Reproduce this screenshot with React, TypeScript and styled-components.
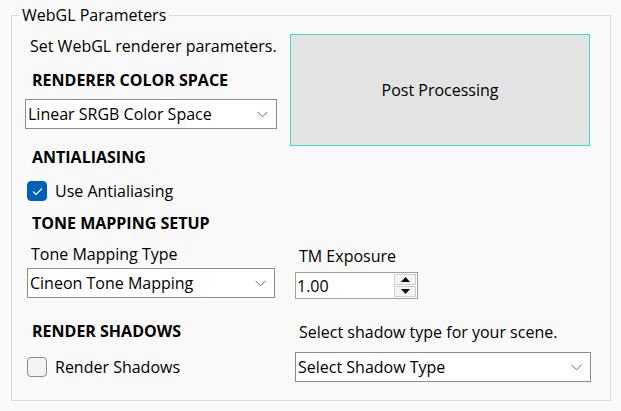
import React from "react";
import styled, { createGlobalStyle } from "styled-components";

const Global = createGlobalStyle`
  html, body { margin: 0; padding: 0; background: #f9f9f9; }
  body { font-family: "Open Sans", "Noto Sans", sans-serif; color: #000; }
  #root { width: 621px; height: 411px; }
`;

const Group = styled.fieldset`
  box-sizing: border-box;
  margin: 4px 0 0 11px;
  width: 600px;
  height: 397px;
  border: 1px solid #d9d9d9;
  padding: 7px 0 0 13px;
  display: flex;
  flex-direction: column;
`;

const Legend = styled.legend`
  font-size: 16px;
  line-height: 22px;
  padding: 0 3px;
  margin-left: -6px;
`;

const Row = styled.div`
  display: flex;
  align-items: flex-start;
`;

const Column = styled.div<{ $w?: number }>`
  display: flex;
  flex-direction: column;
  width: ${(p) => (p.$w ? `${p.$w}px` : "auto")};
`;

const Text = styled.div<{ $indent?: number; $mt?: number }>`
  font-size: 16px;
  line-height: 22px;
  margin-left: ${(p) => p.$indent ?? 0}px;
  margin-top: ${(p) => p.$mt ?? 0}px;
  white-space: nowrap;
`;

const Heading = styled.div<{ $mt?: number }>`
  font-size: 16px;
  font-weight: 700;
  line-height: 22px;
  margin-left: 7px;
  margin-top: ${(p) => p.$mt ?? 0}px;
  white-space: nowrap;
`;

const SelectBox = styled.div<{ $w: number; $mt?: number; $indent?: number }>`
  box-sizing: border-box;
  width: ${(p) => p.$w}px;
  height: 30px;
  margin-top: ${(p) => p.$mt ?? 0}px;
  margin-left: ${(p) => p.$indent ?? 0}px;
  background: #fff;
  border: 1px solid #8c8c8c;
  display: flex;
  align-items: center;
  justify-content: space-between;
  padding: 0 8px 0 2px;
  font-size: 16px;
  white-space: nowrap;
`;

const Chevron = () => (
  <svg width="11" height="7" viewBox="0 0 11 7">
    <path d="M0.5 0.8 L5.5 5.8 L10.5 0.8" fill="none" stroke="#6a6a6a" strokeWidth="1" />
  </svg>
);

const Select = ({ w, label, mt, indent }: { w: number; label: string; mt?: number; indent?: number }) => (
  <SelectBox $w={w} $mt={mt} $indent={indent}>
    <span>{label}</span>
    <Chevron />
  </SelectBox>
);

const PostButton = styled.button`
  box-sizing: border-box;
  width: 300px;
  height: 112px;
  margin: 1px 0 0 13px;
  background: #e3e3e3;
  border: 1px solid #40dccb;
  font-family: inherit;
  font-size: 16px;
  color: #000;
  padding: 0;
`;

const CheckRow = styled.label<{ $mt?: number }>`
  display: flex;
  align-items: center;
  gap: 8px;
  margin-left: 2px;
  margin-top: ${(p) => p.$mt ?? 0}px;
  font-size: 16px;
  line-height: 22px;
`;

const Box = styled.span<{ $on?: boolean }>`
  box-sizing: border-box;
  width: 20px;
  height: 20px;
  border-radius: 4px;
  display: flex;
  align-items: center;
  justify-content: center;
  background: ${(p) => (p.$on ? "#005fb8" : "#f3f3f3")};
  border: 1px solid ${(p) => (p.$on ? "#005fb8" : "#8a8a8a")};
`;

const Spin = styled.div`
  box-sizing: border-box;
  width: 123px;
  height: 27px;
  margin-top: 5px;
  background: #fff;
  border: 1px solid #a0a0a0;
  display: flex;
  align-items: center;
  justify-content: space-between;
  padding: 0 1px 0 1px;
  font-size: 16px;
`;

const SpinButtons = styled.div`
  display: flex;
  flex-direction: column;
  gap: 1px;
  width: 22px;
`;

const SpinBtn = styled.span`
  box-sizing: border-box;
  height: 11px;
  border: 1px solid #cfcfcf;
  background: #f4f4f4;
  display: flex;
  align-items: center;
  justify-content: center;
`;

export default function App() {
  return (
    <>
      <Global />
      <Group>
        <Legend>WebGL Parameters</Legend>
        <Row>
          <Column $w={252}>
            <Text $indent={5} $mt={2}>Set WebGL renderer parameters.</Text>
            <Heading $mt={12}>RENDERER COLOR SPACE</Heading>
            <Select w={252} label="Linear SRGB Color Space" mt={8} />
          </Column>
          <PostButton>Post Processing</PostButton>
        </Row>
        <Heading $mt={0}>ANTIALIASING</Heading>
        <CheckRow $mt={12}>
          <Box $on>
            <svg width="11" height="9" viewBox="0 0 11 9">
              <path d="M1 4.5 L4 7.5 L10 1.5" fill="none" stroke="#fff" strokeWidth="1.1" />
            </svg>
          </Box>
          Use Antialiasing
        </CheckRow>
        <Heading $mt={10}>TONE MAPPING SETUP</Heading>
        <Row>
          <Column $w={270}>
            <Text $indent={6} $mt={9}>Tone Mapping Type</Text>
            <Select w={248} label="Cineon Tone Mapping" mt={3} indent={2} />
          </Column>
          <Column>
            <Text $indent={4} $mt={11}>TM Exposure</Text>
            <Spin>
              <span>1.00</span>
              <SpinButtons>
                <SpinBtn>
                  <svg width="9" height="5" viewBox="0 0 9 5"><path d="M4.5 0 L9 5 L0 5 Z" fill="#000" /></svg>
                </SpinBtn>
                <SpinBtn>
                  <svg width="9" height="5" viewBox="0 0 9 5"><path d="M0 0 L9 0 L4.5 5 Z" fill="#000" /></svg>
                </SpinBtn>
              </SpinButtons>
            </Spin>
          </Column>
        </Row>
        <Row>
          <Column $w={270}>
            <Heading $mt={21}>RENDER SHADOWS</Heading>
            <CheckRow $mt={14}>
              <Box />
              Render Shadows
            </CheckRow>
          </Column>
          <Column>
            <Text $indent={4} $mt={22}>Select shadow type for your scene.</Text>
            <Select w={296} label="Select Shadow Type" mt={9} />
          </Column>
        </Row>
      </Group>
    </>
  );
}
